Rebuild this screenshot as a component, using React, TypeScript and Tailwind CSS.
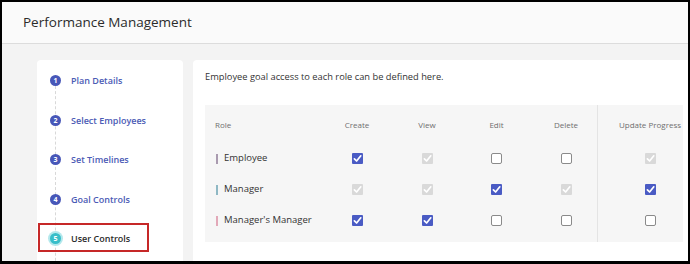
import React from "react";

type CB = "on" | "dis" | "off";

function Box({ s }: { s: CB }) {
  if (s === "off") {
    return <div className="w-[11px] h-[11px] rounded-[2px] border border-[#8a8a8a] bg-white" />;
  }
  return (
    <div className={`w-[11px] h-[11px] rounded-[1px] flex items-center justify-center ${s === "on" ? "bg-[#4a5bc4]" : "bg-[#d9d9d9]"}`}>
      <svg width="11" height="11" viewBox="0 0 11 11">
        <path d="M2.4 5.8 L4.6 8 L8.8 2.8" fill="none" stroke="white" strokeWidth="1.7" strokeLinecap="round" strokeLinejoin="round" />
      </svg>
    </div>
  );
}

const steps = ["Plan Details", "Select Employees", "Set Timelines", "Goal Controls", "User Controls"];

const rows: { name: string; bar: string; vals: CB[] }[] = [
  { name: "Employee", bar: "bg-[#a99aaf]", vals: ["on", "dis", "off", "off", "dis"] },
  { name: "Manager", bar: "bg-[#8fb8c4]", vals: ["dis", "dis", "on", "dis", "on"] },
  { name: "Manager's Manager", bar: "bg-[#e2a8b8]", vals: ["on", "on", "off", "off", "off"] },
];

const cols = "grid grid-cols-[117px_70px_70px_69px_70px_1fr]";

export default function App() {
  return (
    <div
      className="w-[690px] h-[264px] border-2 border-b-[3px] border-black flex flex-col overflow-hidden bg-[#f3f3f3]"
      style={{ fontFamily: "'Open Sans', 'Noto Sans', sans-serif" }}
    >
      <div className="h-[42px] shrink-0 bg-[#fafafa] border-b border-[#dcdcdc] flex items-center pl-[21px]">
        <span className="text-[13.5px] text-[#2b2b2b]">Performance Management</span>
      </div>
      <div className="flex-1 flex pt-[16px] pl-[35px] gap-[10px] min-h-0">
        <div className="w-[146px] bg-white rounded-t-[4px] relative shrink-0 pt-[1px]">
          <div className="absolute left-[18px] top-[21px] h-[200px] border-l border-dashed border-[#d8d8d8]" />
          {steps.map((s, i) => {
            const active = i === 4;
            return (
              <div key={s} className="h-[39.5px] flex items-center pl-[13px] relative">
                {active ? (
                  <div className="w-[11px] h-[11px] rounded-full bg-[#38bec9] ring-2 ring-[#b4e8ec] flex items-center justify-center text-white text-[7px] font-bold leading-none">
                    {i + 1}
                  </div>
                ) : (
                  <div className="w-[11px] h-[11px] rounded-full bg-[#4757b8] flex items-center justify-center text-white text-[7px] font-bold leading-none">
                    {i + 1}
                  </div>
                )}
                <span className={`ml-[10px] text-[9px] font-semibold ${active ? "text-[#2b2b2b]" : "text-[#4b5bb5]"}`}>{s}</span>
              </div>
            );
          })}
          <div className="absolute left-[1px] top-[163px] w-[111px] h-[29px] border-2 border-[#c62828]" />
        </div>
        <div className="flex-1 bg-white rounded-tl-[4px] pl-[12px] pr-[5px] pt-[10px]">
          <div className="text-[9.3px] text-[#333] h-[14px] leading-[14px]">Employee goal access to each role can be defined here.</div>
          <div className="mt-[21px] bg-[#f6f6f6] relative pb-[6px]">
            <div className="absolute left-[392px] top-0 bottom-0 w-px bg-[#e4e4e4]" />
            <div className={`${cols} h-[38px] items-center text-[8px] text-[#6f6f6f] pt-[1px]`}>
              <div className="pl-[10px]">Role</div>
              <div className="text-center">Create</div>
              <div className="text-center">View</div>
              <div className="text-center">Edit</div>
              <div className="text-center">Delete</div>
              <div className="text-center pl-[16px] whitespace-nowrap">Update Progress</div>
            </div>
            {rows.map((r) => (
              <div key={r.name} className={`${cols} h-[31px] items-center`}>
                <div className="pl-[11px] flex items-center">
                  <div className={`w-[2px] h-[10px] ${r.bar}`} />
                  <span className="ml-[6px] text-[9.5px] text-[#333]">{r.name}</span>
                </div>
                {r.vals.map((v, j) => (
                  <div key={j} className={`flex justify-center ${j === 4 ? "pl-[16px]" : ""}`}>
                    <Box s={v} />
                  </div>
                ))}
              </div>
            ))}
          </div>
        </div>
      </div>
    </div>
  );
}
